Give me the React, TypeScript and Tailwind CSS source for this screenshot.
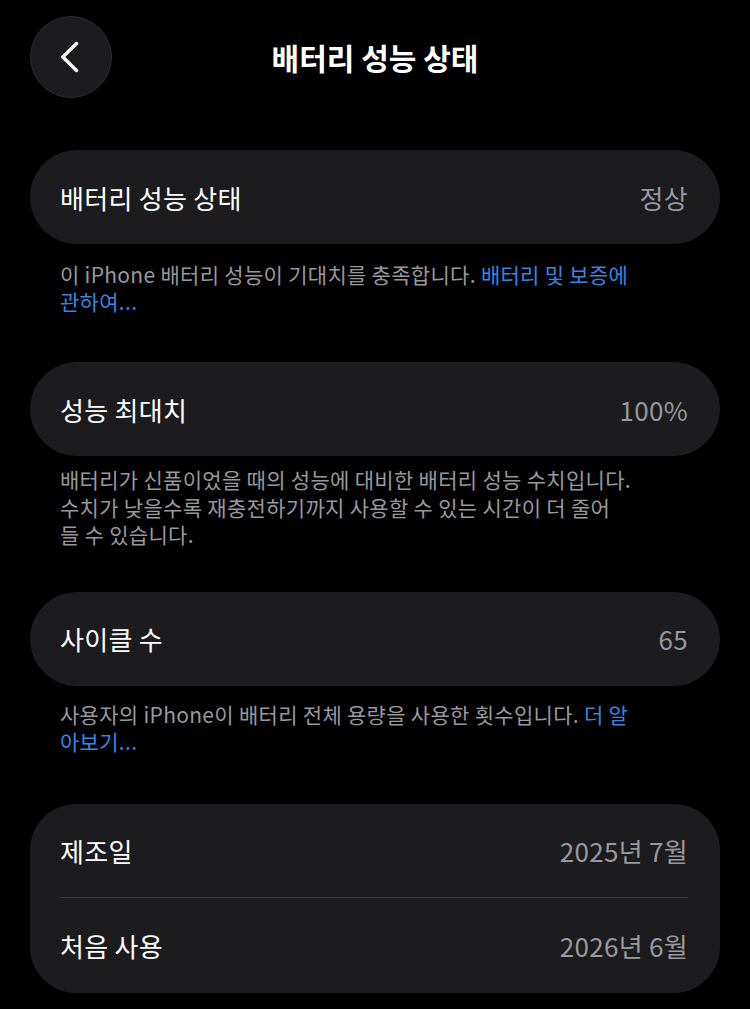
import React from "react";

const font = { fontFamily: '"Noto Sans CJK KR", "Noto Sans", sans-serif' };

function Row({ label, value }: { label: string; value: string }) {
  return (
    <div className="flex h-[94px] items-center justify-between rounded-full bg-[#1c1c1e] pl-[30px] pr-[32px]">
      <span className="text-[26px] tracking-[0.3px] text-white">{label}</span>
      <span className="text-[26px] tracking-[0.3px] text-[#98989d]">{value}</span>
    </div>
  );
}

export default function App() {
  return (
    <div style={font} className="min-h-[1009px] w-[750px] bg-black px-[30px] pt-[16px]">
      <div className="relative flex h-[82px] items-center justify-center">
        <button className="absolute left-0 top-0 flex h-[82px] w-[82px] items-center justify-center rounded-full border border-[#2c2c2e] bg-[#1c1c1e]">
          <svg width="20" height="34" viewBox="0 0 20 34" fill="none" stroke="white" strokeWidth="3.4" strokeLinecap="round" strokeLinejoin="round">
            <path d="M15.5 3.5 L1.8 17 L15.5 30.5" />
          </svg>
        </button>
        <h1 className="text-[30px] font-bold text-white">배터리 성능 상태</h1>
      </div>

      <div className="mt-[52px]">
        <Row label="배터리 성능 상태" value="정상" />
        <p className="px-[30px] pt-[17px] text-[21px] leading-[27px] tracking-[0.3px] text-[#98989f]">
          이 iPhone 배터리 성능이 기대치를 충족합니다. <span className="text-[#3687e2]">배터리 및 보증에</span>
          <br />
          <span className="text-[#3687e2]">관하여...</span>
        </p>
      </div>

      <div className="mt-[47px]">
        <Row label="성능 최대치" value="100%" />
        <p className="px-[30px] pt-[10px] text-[21px] leading-[27.5px] tracking-[0.3px] text-[#98989f]">
          배터리가 신품이었을 때의 성능에 대비한 배터리 성능 수치입니다.
          <br />
          수치가 낮을수록 재충전하기까지 사용할 수 있는 시간이 더 줄어
          <br />
          들 수 있습니다.
        </p>
      </div>

      <div className="mt-[43px]">
        <Row label="사이클 수" value="65" />
        <p className="px-[30px] pt-[15px] text-[21px] leading-[27px] tracking-[0.3px] text-[#98989f]">
          사용자의 iPhone이 배터리 전체 용량을 사용한 횟수입니다. <span className="text-[#3687e2]">더 알</span>
          <br />
          <span className="text-[#3687e2]">아보기...</span>
        </p>
      </div>

      <div className="mt-[49px] rounded-[46px] bg-[#1c1c1e] pl-[30px] pr-[32px]">
        <div className="flex h-[94px] items-center justify-between border-b border-[#38383a]">
          <span className="text-[26px] tracking-[0.3px] text-white">제조일</span>
          <span className="text-[26px] tracking-[0.3px] text-[#98989d]">2025년 7월</span>
        </div>
        <div className="flex h-[95px] items-center justify-between">
          <span className="text-[26px] tracking-[0.3px] text-white">처음 사용</span>
          <span className="text-[26px] tracking-[0.3px] text-[#98989d]">2026년 6월</span>
        </div>
      </div>
    </div>
  );
}
